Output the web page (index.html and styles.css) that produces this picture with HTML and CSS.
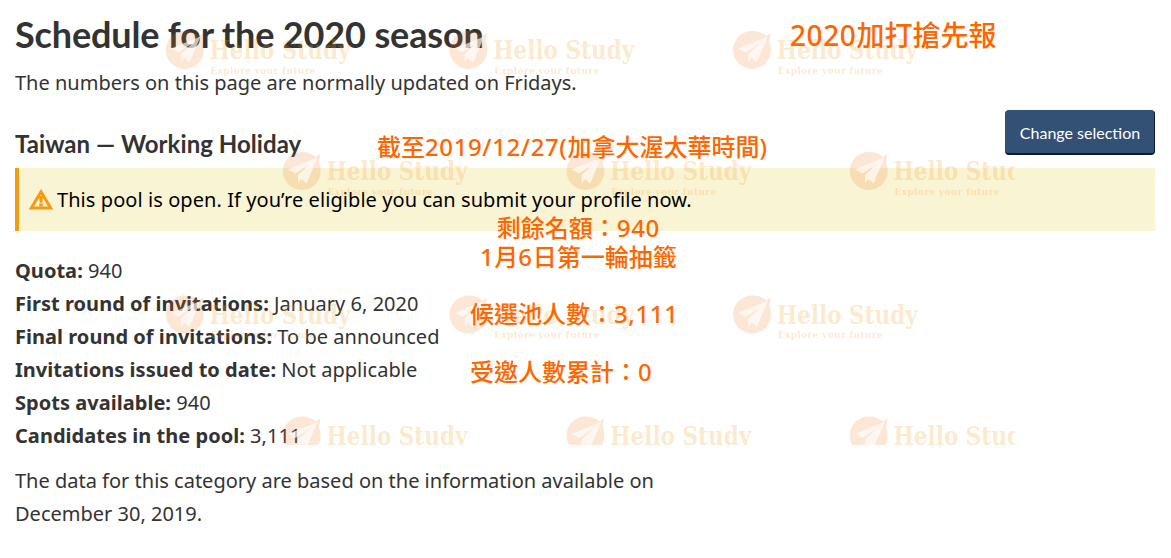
FILE: index.html
```html
<!DOCTYPE html>
<html lang="en">
<head>
    <meta charset="UTF-8">
    <title>Schedule for the 2020 season</title>
    <link rel="stylesheet" href="styles.css">
</head>
<body>
<main class="page">
    <h2 class="title">Schedule for the 2020 season</h2>
    <p class="intro">The numbers on this page are normally updated on Fridays.</p>
    <div class="heading">
        <h3>Taiwan — Working Holiday</h3>
        <button class="btn" type="button">Change selection</button>
    </div>
    <div class="alert">
        <svg class="alertIcon" viewBox="0 0 24 21" width="24" height="21">
            <path d="M12 2.8L21.6 18.9H2.4Z" fill="#fbf1d4" stroke="#f39c12" stroke-width="3" stroke-linejoin="miter"/>
            <path d="M9.8 7h4.4l-1 6.8h-2.4zM10.2 14.4h3.6v3.2h-3.6z" fill="#f39c12"/>
        </svg>
        <p>This pool is open. If you’re eligible you can submit your profile now.</p>
    </div>
    <ul class="list">
        <li><strong>Quota:</strong> 940</li>
        <li><strong>First round of invitations:</strong> January 6, 2020</li>
        <li><strong>Final round of invitations:</strong> To be announced</li>
        <li><strong>Invitations issued to date:</strong> Not applicable</li>
        <li><strong>Spots available:</strong> 940</li>
        <li><strong>Candidates in the pool:</strong> 3,111</li>
    </ul>
    <p class="info">The data for this category are based on the information available on December 30, 2019.</p>
</main>

<!-- watermark -->
<svg class="watermark" width="1015" height="445">
    <defs>
        <g id="logo">
            <path class="disc" d="M19 0C25 0 29 2 32.5 5L36.8 2L35.5 11A19 19 0 1 1 19 0Z"/>
            <path class="plane" d="M34 5.5L4.5 17.5L12 21.5L27 11.5L14.5 23V31L18 27L23 31.5Z"/>
            <text class="name" x="43" y="28" textLength="141" lengthAdjust="spacingAndGlyphs">Hello Study</text>
            <text class="slogan" x="44" y="42.5" textLength="105" lengthAdjust="spacing">Explore your future</text>
        </g>
    </defs>
    <use href="#logo" x="166.5" y="31"/>
    <use href="#logo" x="450.2" y="31"/>
    <use href="#logo" x="733.8" y="31"/>
    <use href="#logo" x="283.5" y="152"/>
    <use href="#logo" x="567.2" y="152"/>
    <use href="#logo" x="850.5" y="152"/>
    <use href="#logo" x="166.5" y="295.5"/>
    <use href="#logo" x="450.2" y="295.5"/>
    <use href="#logo" x="733.8" y="295.5"/>
    <use href="#logo" x="283.5" y="416.5"/>
    <use href="#logo" x="567.2" y="416.5"/>
    <use href="#logo" x="850.5" y="416.5"/>
</svg>

<!-- notes -->
<div class="note noteTitle" lang="zh-TW"><span>2020</span>加打搶先報</div>
<div class="note noteDate" lang="zh-TW">截至<span>2019/12/27(</span>加拿大渥太華時間<span>)</span></div>
<div class="note noteQuota" lang="zh-TW">剩餘名額：<span>940</span><br><span>1</span>月<span>6</span>日第一輪抽籤</div>
<div class="note notePool" lang="zh-TW">候選池人數：<span>3,111</span><br><br>受邀人數累計：<span>0</span></div>
</body>
</html>
```
FILE: styles.css
```css
*{
    margin: 0;
    padding: 0;
    box-sizing: border-box;
}
body{
    height: 558px;
    overflow: hidden;
    position: relative;
    background-color: #fff;
    color: #333;
    font-family: "Noto Sans", sans-serif;
    font-size: 20px;
    line-height: 33px;
}
li{
    list-style: none;
}
.page{
    padding: 14px 16px 0 15px;
}
.title{
    font: bold 36px/40px Lato, sans-serif;
    letter-spacing: -.15px;
}
.intro{
    margin-top: 12px;
}
.heading{
    display: flex;
    justify-content: space-between;
    align-items: flex-start;
    margin-top: 11px;
    height: 58px;
}
.heading h3{
    padding-top: 20px;
    font: bold 24px/28px Lato, sans-serif;
    letter-spacing: .05px;
}
.btn{
    width: 150px;
    height: 45px;
    border: 1px solid #335075;
    border-right-color: #091c2d;
    border-bottom: 2px solid #091c2d;
    border-radius: 4px;
    background-color: #335075;
    color: #fff;
    font: 16px Lato, sans-serif;
    white-space: nowrap;
}
.alert{
    display: flex;
    height: 63px;
    padding: 15px 0 15px 10px;
    border-left: 4px solid #f39c12;
    background-color: #f9f4d4;
    color: #000;
}
.alert p{
    letter-spacing: .07px;
}
.alertIcon{
    margin: 6px 4px 0 0;
}
.list{
    margin-top: 23px;
    letter-spacing: .03px;
}
.info{
    width: 680px;
    margin-top: 12px;
}
.watermark{
    position: absolute;
    left: 0;
    top: 0;
    overflow: hidden;
}
.disc{
    fill: rgba(240,120,30,.18);
}
.plane{
    fill: rgba(255,255,255,.65);
}
.name,
.slogan{
    font-family: "DejaVu Serif", serif;
    font-weight: bold;
    fill: rgba(245,160,40,.24);
}
.name{
    font-size: 26px;
}
.slogan{
    font-size: 9px;
}
.note{
    position: absolute;
    color: #f60;
    font-family: "Noto Sans", "Noto Sans CJK TC", sans-serif;
    font-size: 24px;
    font-weight: 500;
    line-height: 29px;
    white-space: nowrap;
}
/* digits are set a little wider than the characters */
.note span{
    letter-spacing: .6px;
}
.noteTitle{
    left: 790px;
    top: 21px;
    font-size: 28px;
}
.noteDate{
    left: 377px;
    top: 132px;
}
.noteQuota{
    left: 480px;
    top: 213px;
    text-align: center;
}
.notePool{
    left: 470px;
    top: 299px;
}
```
